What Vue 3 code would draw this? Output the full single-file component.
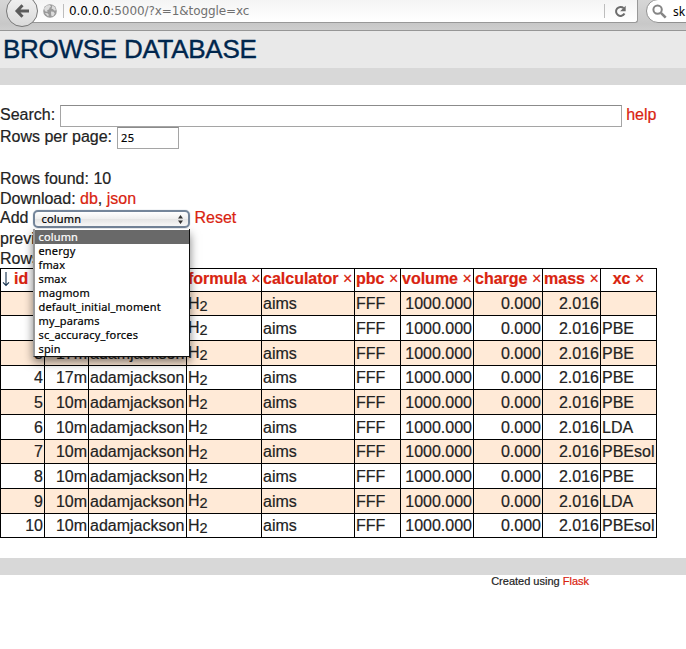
<script setup>
const options = ['column', 'energy', 'fmax', 'smax', 'magmom', 'default_initial_moment', 'my_params', 'sc_accuracy_forces', 'spin']
const headers = ['formula', 'calculator', 'pbc', 'volume', 'charge', 'mass', 'xc']
const xc = ['', 'PBE', 'PBE', 'PBE', 'PBE', 'LDA', 'PBEsol', 'PBE', 'LDA', 'PBEsol']
const rows = xc.map((functional, i) => ({ id: i + 1, age: i < 4 ? '17m' : '10m', xc: functional }))
</script>

<template>
  <div class="page">
    <header class="chrome">
      <div class="urlbar">
        <svg class="globe" width="14" height="14" viewBox="0 0 14 14">
          <circle cx="7" cy="7" r="6.8" fill="#9a9a9a" />
          <path d="M1 4.5 3.5 1.4 7 1l1 1.7-1.5 1-.3 1.5-2 1L4.5 8 2 7.2zM9.3 1.2l2.7 2 1 3-1.8.2-1.4-1.5-1.2.1zM1.8 9l2.7.3 1.3 1.5-.6 1.8zM8 7.5l2.5.2 1.3 1.7-1.5 2.5-1.7.3-.5-2z" fill="#f2f2f2" opacity=".75" />
        </svg>
        <span class="divider first"></span>
        <span class="url"><b>0.0.0.0</b>:5000/?x=1&amp;toggle=xc</span>
        <span class="divider last"></span>
        <svg class="reload" width="13" height="13" viewBox="0 0 13 13">
          <path d="M9.6 3.1A4.5 4.5 0 1 0 10.5 8.6" fill="none" stroke="#6c6c6c" stroke-width="2" />
          <path d="M11.7.7v5.6H6.1z" fill="#6c6c6c" />
        </svg>
      </div>
      <div class="searchbar">
        <svg width="15" height="15" viewBox="0 0 15 15" fill="none" stroke="#858585">
          <circle cx="5.6" cy="5.6" r="4.2" stroke-width="2" />
          <path d="m8.9 8.9 4.8 4.8" stroke-width="2.6" />
        </svg>
        <span>sk</span>
      </div>
      <div class="back">
        <svg width="16" height="16" viewBox="0 0 16 16">
          <path d="M8.5 2.2 3 8l5.5 5.8M3.5 8H15" fill="none" stroke="#5b5b5b" stroke-width="3" />
        </svg>
      </div>
    </header>
    <h1>BROWSE DATABASE</h1>
    <div class="band"></div>
    <form class="form" @submit.prevent>
      <div class="line search-line"><label>Search:</label><input class="query" type="text"><a>help</a></div>
      <div class="line"><label>Rows per page:</label><input class="limit" type="text" value="25"></div>
    </form>
    <div class="info">
      <div class="found">Rows found: 10</div>
      <div class="download">Download: <a>db</a>, <a>json</a></div>
      <div class="add">
        <span>Add</span>
        <div class="picker">
          <div class="select">
            <span>column</span>
            <svg width="5" height="9" viewBox="0 0 5 9"><path d="M2.5 0 5 3.5H0zM0 5.5h5L2.5 9z" fill="#333" /></svg>
          </div>
          <div class="menu">
            <div v-for="(o, i) in options" :key="o" class="option" :class="{ active: i === 0 }">{{ o }}</div>
          </div>
        </div>
        <a>Reset</a>
      </div>
      <div class="previous">previous next</div>
      <div class="shown">Rows: 1-10</div>
    </div>
    <table>
      <colgroup>
        <col class="c-id"><col class="c-age"><col class="c-user"><col class="c-formula"><col class="c-calc">
        <col class="c-pbc"><col class="c-volume"><col class="c-charge"><col class="c-mass"><col class="c-xc">
      </colgroup>
      <thead>
        <tr>
          <th class="sorted">
            <svg width="8" height="16" viewBox="0 0 8 16"><path d="M4 1v13.5M1 11.3l3 3.2 3-3.2" fill="none" stroke="#16324f" stroke-width="1.1" /></svg>
            <a>id</a>
          </th>
          <th><a>age</a></th>
          <th><a>user</a></th>
          <th v-for="h in headers" :key="h" :class="{ centered: h === 'xc' }"><a>{{ h }} <span class="x">×</span></a></th>
        </tr>
      </thead>
      <tbody>
        <tr v-for="r in rows" :key="r.id">
          <td class="num">{{ r.id }}</td>
          <td class="num age">{{ r.age }}</td>
          <td>adamjackson</td>
          <td class="formula">H<span class="sub">2</span></td>
          <td>aims</td>
          <td>FFF</td>
          <td class="num">1000.000</td>
          <td class="num">0.000</td>
          <td class="num mass">2.016</td>
          <td>{{ r.xc }}</td>
        </tr>
      </tbody>
    </table>
    <div class="band bottom"></div>
    <footer>Created using <a>Flask</a></footer>
  </div>
</template>

<style>
body { margin: 0; background: #fff; }
</style>

<style scoped>
* { box-sizing: border-box; }
.page { width: 686px; height: 649px; overflow: hidden; font: 16px/19px "Liberation Sans", Arial, sans-serif; color: #222; -webkit-text-stroke: .2px; }
a { color: #d9230f; text-decoration: none; }

.chrome { position: relative; height: 31px; display: flex; align-items: flex-start; gap: 8px; padding-left: 26px; background: linear-gradient(#d6d6d6, #c8c8c8 24px, #cecece); border-bottom: 1px solid #969696; overflow: hidden; -webkit-text-stroke: 0; }
.urlbar { width: 612px; flex: none; height: 23px; display: flex; align-items: center; background: linear-gradient(#f4f4f4, #fff); border: 1px solid #989898; border-top: 0; border-left: 0; border-radius: 0 0 3px 0; padding-left: 17px; }
.globe { flex: none; }
.divider { width: 1px; height: 14px; background: #bdbdbd; }
.divider.first { margin-left: 6px; }
.url { margin-left: 5px; font: 12px/20px "DejaVu Sans", sans-serif; letter-spacing: -.09px; color: #707070; white-space: nowrap; }
.url b { font-weight: 400; color: #000; }
.divider.last { margin-left: auto; }
.reload { margin: 0 10px 0 9px; }
.searchbar { width: 80px; height: 24px; flex: none; margin-top: -1px; padding: 0 0 0 5px; display: flex; align-items: center; gap: 6px; border: 1px solid #919191; border-radius: 12px 0 0 12px; background: #fff; font: 12px "Noto Sans", sans-serif; color: #000; }
.back { position: absolute; left: 6px; top: -5px; width: 32px; height: 32px; border: 1px solid #777; border-radius: 50%; background: linear-gradient(#f2f2f2, #dadada); display: flex; align-items: center; justify-content: center; }

h1 { margin: 0; height: 37px; padding: 1px 0 0 3px; background: #e9e9e9; color: #00264d; font-size: 26px; line-height: 35px; font-weight: 400; letter-spacing: -.27px; white-space: nowrap; -webkit-text-stroke: .4px; }
.band { height: 17px; background: #d8d8d8; }

.form { padding-top: 20px; }
.line { display: flex; height: 22px; line-height: 20px; }
.query, .limit { border: 1px solid #a5a5a5; border-top-color: #8b8b8b; border-radius: 0; background: #fff; height: 22px; padding: 0 3px; font: 11px "Noto Sans", sans-serif; color: #000; outline: 0; }
.query { width: 562px; margin: 0 4px 0 5px; }
.limit { width: 62px; margin-left: 5px; padding-bottom: 1px; letter-spacing: .3px; }

.info { padding-top: 20px; height: 119px; }
.found { height: 20px; line-height: 19px; }
.download { height: 20px; line-height: 20px; }
.add { display: flex; height: 20px; line-height: 18px; }
.picker { position: relative; width: 157px; margin: 0 4px 0 5px; }
.select { width: 157px; height: 18px; margin-top: 1px; border: 2px solid #74859a; border-radius: 5px; background: linear-gradient(#fff, #eee 50%, #e4e4e4 51%, #fafafa); box-shadow: 0 0 1px #8294a8; display: flex; align-items: center; justify-content: space-between; padding: 0 5px 0 6px; font: 11px/14px "Noto Sans", sans-serif; letter-spacing: .2px; color: #000; }
.menu { position: absolute; z-index: 2; left: 0; top: 20px; width: 157px; height: 128px; padding-top: 1px; background: #fff; border-left: 2px solid #999; border-right: 1px solid #111; border-bottom: 1px solid #111; box-shadow: 0 5px 9px rgba(0, 0, 0, .5); }
.option { height: 14px; line-height: 14px; padding-left: 3px; font-family: "Noto Sans", sans-serif; font-size: 11px; letter-spacing: .16px; color: #000; }
.option.active { background: #696969; color: #fff; }
.previous { line-height: 20px; height: 20px; }

table { width: 657px; table-layout: fixed; border-collapse: separate; border-spacing: 0; border-left: 1px solid #000; border-top: 1px solid #000; }
.c-id { width: 44px; } .c-age { width: 44px; } .c-user { width: 98px; } .c-formula { width: 75px; } .c-calc { width: 93px; }
.c-pbc { width: 46px; } .c-volume { width: 73px; } .c-charge { width: 69px; } .c-mass { width: 58px; } .c-xc { width: 56px; }
th, td { padding: 0 1px; border-right: 1px solid #000; border-bottom: 1px solid #000; text-align: left; white-space: nowrap; line-height: 23px; height: 25px; overflow: hidden; }
th { height: 23px; line-height: 20px; padding-bottom: 2px; }
.centered { text-align: center; }
.sorted svg { vertical-align: -3px; margin-right: 0; }
.sorted a { margin-left: 4px; }
.x { font-weight: 400; }
tbody tr:nth-child(3n + 1) td { height: 24px; line-height: 22px; }
tbody tr:nth-child(odd) { background: #ffead7; }
.num { text-align: right; }
.age, .mass { padding-right: 1px; }
.formula { padding-left: 1px; }
.sub { position: relative; top: 2px; font-size: 14.5px; }

.band.bottom { margin-top: 20px; }
footer { width: 589px; text-align: right; font-size: 11px; line-height: 13px; }
</style>
